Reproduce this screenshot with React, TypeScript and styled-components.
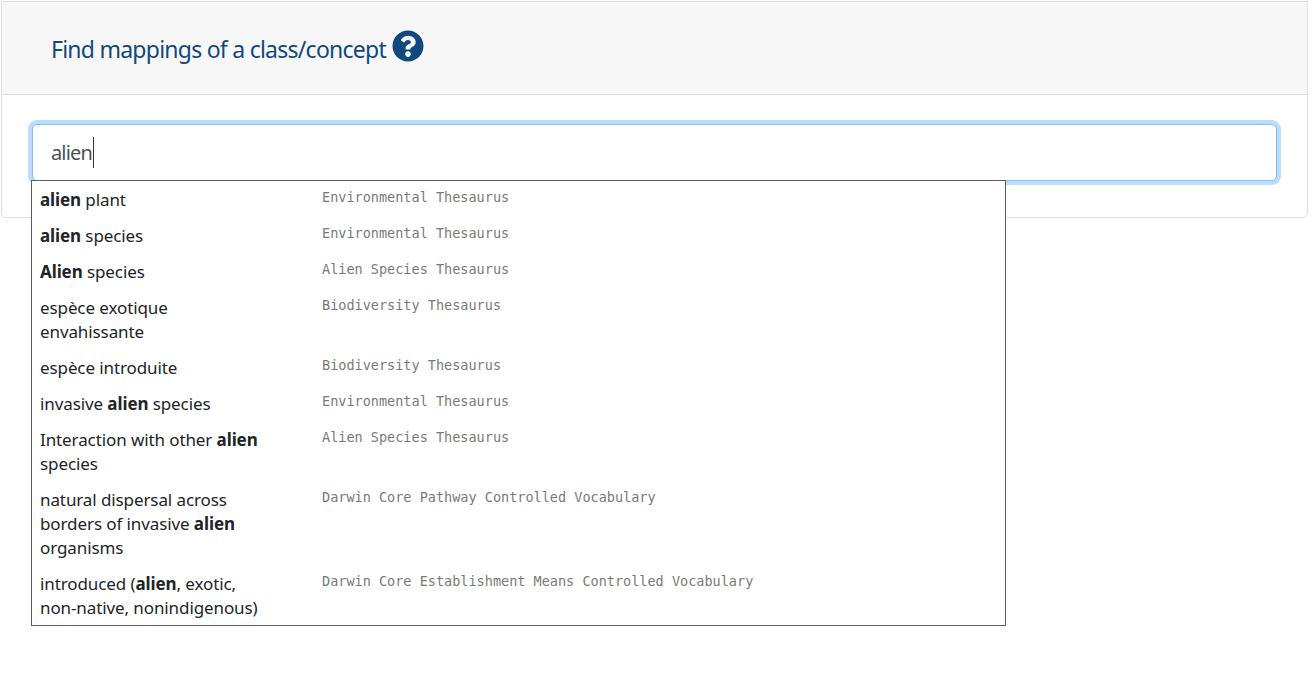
import React from "react";
import styled, { createGlobalStyle } from "styled-components";

const Global = createGlobalStyle`
  html, body { margin: 0; padding: 0; background: #fff; }
  body { font-family: "Noto Sans", "Open Sans", sans-serif; }
`;

const Page = styled.div`
  padding: 1px 7px 0 1px;
  height: 697px;
`;

const Card = styled.section`
  border: 1px solid #dfdfdf;
  border-radius: 0 0 5px 5px;
  height: 217px;
  box-sizing: border-box;
`;

const CardHeader = styled.header`
  height: 92px;
  background: #f7f7f7;
  border-bottom: 1px solid #dfdfdf;
  display: flex;
  align-items: center;
  padding-left: 49px;
  gap: 6px;
`;

const Title = styled.h2`
  margin: 2px 0 0;
  font-family: "Noto Sans", sans-serif;
  font-size: 23px;
  font-weight: 400;
  letter-spacing: -0.75px;
  color: #11497f;
  line-height: 30px;
`;

const HelpIcon = styled.svg`
  width: 32px;
  height: 32px;
  flex: none;
  margin-top: -4px;
`;

const CardBody = styled.div`
  padding: 29px 30px 0 30px;
  position: relative;
`;

const SearchBox = styled.div`
  height: 57px;
  box-sizing: border-box;
  border: 1px solid #80bdff;
  border-radius: 5px;
  box-shadow: 0 0 0 4px #bbdcfe;
  background: #fff;
  display: flex;
  align-items: center;
  padding: 0 0 1px 18px;
  font-size: 20px;
  color: #495057;
  letter-spacing: -0.85px;
`;

const Caret = styled.span`
  width: 1px;
  height: 31px;
  background: #333;
  margin-left: 1px;
`;

const Dropdown = styled.ul`
  position: absolute;
  left: 29px;
  top: 85px;
  width: 975px;
  box-sizing: border-box;
  margin: 0;
  padding: 7px 0 5px;
  list-style: none;
  background: #fff;
  border: 1px solid #5f5f5f;
`;

const Row = styled.li`
  display: flex;
  align-items: flex-start;
  padding-bottom: 12px;
  &:last-child { padding-bottom: 0; }
`;

const Label = styled.div`
  width: 290px;
  padding: 0 18px 0 8px;
  box-sizing: border-box;
  font-size: 17px;
  line-height: 24px;
  letter-spacing: -0.1px;
  color: #212529;
  flex: none;
  b { font-weight: 700; }
`;

const Source = styled.div`
  font-family: "DejaVu Sans Mono", monospace;
  font-size: 13.52px;
  line-height: 20px;
  color: #7a7a7a;
  margin-top: -1px;
`;

const rows: [React.ReactNode, string][] = [
  [<><b>alien</b> plant</>, "Environmental Thesaurus"],
  [<><b>alien</b> species</>, "Environmental Thesaurus"],
  [<><b>Alien</b> species</>, "Alien Species Thesaurus"],
  [<>espèce exotique<br />envahissante</>, "Biodiversity Thesaurus"],
  [<>espèce introduite</>, "Biodiversity Thesaurus"],
  [<>invasive <b>alien</b> species</>, "Environmental Thesaurus"],
  [<>Interaction with other <b>alien</b><br />species</>, "Alien Species Thesaurus"],
  [<>natural dispersal across<br />borders of invasive <b>alien</b><br />organisms</>, "Darwin Core Pathway Controlled Vocabulary"],
  [<>introduced (<b>alien</b>, exotic,<br />non-native, nonindigenous)</>, "Darwin Core Establishment Means Controlled Vocabulary"],
];

export default function App() {
  return (
    <>
      <Global />
      <Page>
        <Card>
          <CardHeader>
            <Title>Find mappings of a class/concept</Title>
            <HelpIcon viewBox="0 0 512 512" aria-hidden="true">
              <path fill="#11497f" d="M504 256c0 136.997-111.043 248-248 248S8 392.997 8 256C8 119.083 119.043 8 256 8s248 111.083 248 248zM262.655 90c-54.497 0-89.255 22.957-116.549 63.758-3.536 5.286-2.353 12.415 2.715 16.258l34.699 26.31c5.205 3.947 12.621 3.008 16.665-2.122 17.864-22.658 30.113-35.797 57.303-35.797 20.429 0 45.698 13.148 45.698 32.958 0 14.976-12.363 22.667-32.534 33.976C247.128 238.528 216 254.941 216 296v4c0 6.627 5.373 12 12 12h56c6.627 0 12-5.373 12-12v-1.333c0-28.462 83.186-29.647 83.186-106.667 0-58.002-60.165-102-116.531-102zM256 338c-25.365 0-46 20.635-46 46 0 25.364 20.635 46 46 46s46-20.636 46-46c0-25.365-20.635-46-46-46z" />
            </HelpIcon>
          </CardHeader>
          <CardBody>
            <SearchBox>alien<Caret /></SearchBox>
            <Dropdown>
              {rows.map(([label, source], i) => (
                <Row key={i}>
                  <Label>{label}</Label>
                  <Source>{source}</Source>
                </Row>
              ))}
            </Dropdown>
          </CardBody>
        </Card>
      </Page>
    </>
  );
}
